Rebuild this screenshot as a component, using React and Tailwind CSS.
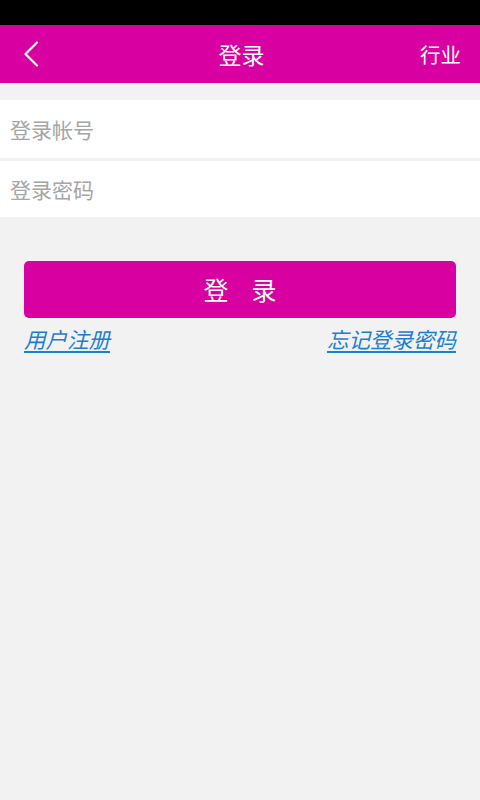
const cjk = { fontFamily: '"Noto Sans CJK SC", "Noto Sans", sans-serif' };

function Header() {
  return (
    <div className="flex h-[58px] items-center justify-between bg-[#d800a0] pl-[23px] pr-[20px] text-white">
      <button className="flex h-[40px] w-[40px] items-center">
        <svg width="16" height="26" viewBox="0 0 16 26" fill="none">
          <path d="M14 1.5L2.5 13L14 24.5" stroke="white" strokeWidth="2.2" strokeLinecap="round" strokeLinejoin="round" />
        </svg>
      </button>
      <h1 className="text-[23px]">登录</h1>
      <span className="w-[40px] text-right text-[20.5px] whitespace-nowrap">行业</span>
    </div>
  );
}

export default function App() {
  return (
    <div className="flex min-h-[800px] flex-col bg-[#f2f2f2]" style={cjk}>
      <div className="h-[25px] bg-black" />
      <Header />
      <div className="mt-[17px] flex flex-col gap-[3px]">
        <input
          className="h-[58px] bg-white px-[10px] text-[21px] text-[#333] outline-none placeholder:text-[#a5a5a5]"
          placeholder="登录帐号"
        />
        <input
          type="password"
          className="h-[56px] bg-white px-[10px] text-[21px] text-[#333] outline-none placeholder:text-[#a5a5a5]"
          placeholder="登录密码"
        />
      </div>
      <div className="mt-[44px] px-[24px]">
        <button className="flex h-[57px] w-full items-center justify-center gap-[23px] rounded-[5px] bg-[#d800a0] text-[25px] text-white">
          <span>登</span>
          <span>录</span>
        </button>
        <div className="mt-[6px] flex justify-between text-[21.5px] leading-[30px] italic text-[#1d7fd2]">
          <a className="underline underline-offset-[3px]">用户注册</a>
          <a className="underline underline-offset-[3px]">忘记登录密码</a>
        </div>
      </div>
    </div>
  );
}
